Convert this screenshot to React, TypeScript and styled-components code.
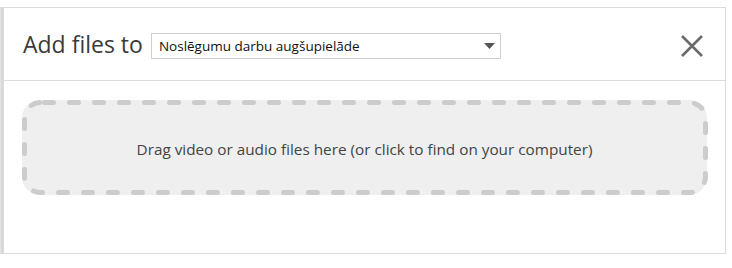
import React from "react";
import styled, { createGlobalStyle } from "styled-components";

const Global = createGlobalStyle`
  html, body { margin: 0; padding: 0; background: #fff; }
  body { font-family: "Open Sans", "Noto Sans", sans-serif; }
`;

const Page = styled.div`
  width: 732px;
  height: 268px;
  display: flex;
  align-items: flex-start;
  padding: 7px 0 0 0;
  box-sizing: border-box;
  background: #fff;
  overflow: hidden;
`;

const Backdrop = styled.div`
  width: 3px;
  height: 247px;
  background: linear-gradient(to right, #e6e6e6, #d2d2d2);
  flex: none;
`;

const Dialog = styled.div`
  width: 723px;
  height: 247px;
  box-sizing: border-box;
  border: 1px solid #dcdcdc;
  background: #fff;
  display: flex;
  flex-direction: column;
`;

const Header = styled.div`
  height: 73px;
  box-sizing: border-box;
  border-bottom: 1px solid #dcdcdc;
  display: flex;
  align-items: center;
  padding: 0 22px 0 19px;
`;

const Title = styled.h2`
  margin: 0 8px 0 0;
  font-weight: 400;
  font-size: 23px;
  color: #3a3a3a;
`;

const Select = styled.div`
  width: 350px;
  height: 26px;
  box-sizing: border-box;
  border: 1px solid #cfcfcf;
  display: flex;
  align-items: center;
  justify-content: space-between;
  padding: 0 5px 0 7px;
  font-size: 13.5px;
  color: #111;
  margin-top: 4px;
`;

const Close = styled.button`
  margin-left: auto;
  margin-top: 4px;
  border: 0;
  background: none;
  padding: 0;
  width: 22px;
  height: 22px;
  display: flex;
  cursor: pointer;
`;

const Body = styled.div`
  padding: 19px 18px 0 18px;
`;

const DropZone = styled.div`
  position: relative;
  height: 95px;
  border-radius: 18px;
  background: #efefef;
  display: flex;
  align-items: center;
  justify-content: center;
  font-size: 15.3px;
  color: #444;
  padding-top: 2px;
  box-sizing: border-box;
`;

const DashFrame = styled.svg`
  position: absolute;
  inset: 0;
  pointer-events: none;
`;

export default function App() {
  return (
    <>
      <Global />
      <Page>
        <Backdrop />
        <Dialog>
          <Header>
            <Title>Add files to</Title>
            <Select>
              <span>Noslēgumu darbu augšupielāde</span>
              <svg width="11" height="6" viewBox="0 0 11 6">
                <path d="M0 0H11L5.5 6Z" fill="#555" />
              </svg>
            </Select>
            <Close aria-label="Close">
              <svg width="22" height="22" viewBox="0 0 22 22">
                <path d="M1 1L21 21M21 1L1 21" stroke="#6b6b6b" strokeWidth="2.6" />
              </svg>
            </Close>
          </Header>
          <Body>
            <DropZone>
              <DashFrame width="686" height="95" viewBox="0 0 686 95">
                <rect
                  x="2.5"
                  y="2.5"
                  width="681"
                  height="90"
                  rx="16"
                  fill="none"
                  stroke="#cccccc"
                  strokeWidth="5"
                  strokeDasharray="9 16"
                  strokeDashoffset="-4"
                  strokeLinecap="round"
                />
              </DashFrame>
              Drag video or audio files here (or click to find on your computer)
            </DropZone>
          </Body>
        </Dialog>
      </Page>
    </>
  );
}
